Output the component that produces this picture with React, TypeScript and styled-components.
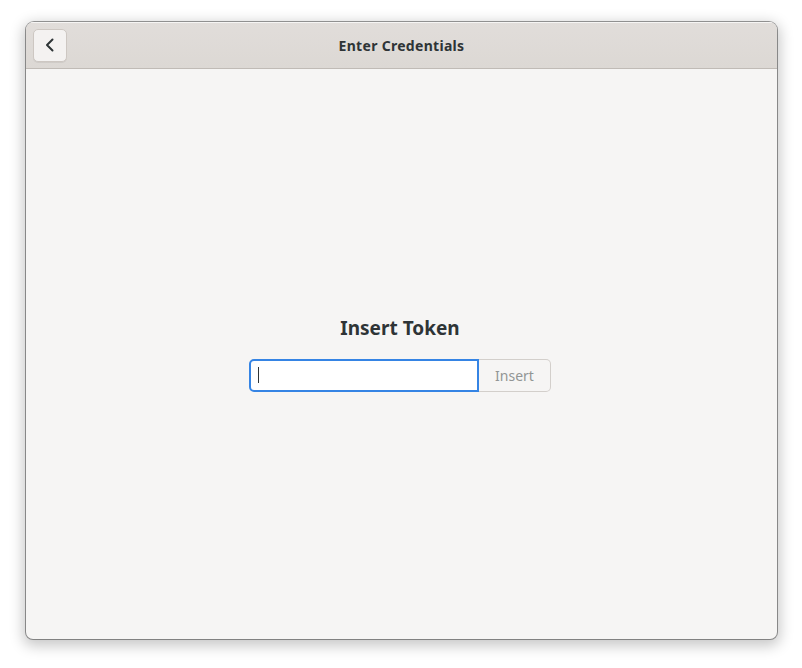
import React from 'react';
import styled, { createGlobalStyle } from 'styled-components';

const GlobalStyle = createGlobalStyle`
  html, body {
    margin: 0;
    padding: 0;
    background: #ffffff;
  }

  body {
    font-family: 'Noto Sans', 'DejaVu Sans', sans-serif;
    color: #2e3436;
  }
`;

const Desktop = styled.div`
  width: 802px;
  height: 668px;
  padding: 22px 25px 29px 26px;
  box-sizing: border-box;
`;

const Window = styled.div`
  height: 100%;
  display: flex;
  flex-direction: column;
  border-radius: 8px 8px 7px 7px;
  overflow: hidden;
  background: #f6f5f4;
  box-shadow: 0 0 0 1px rgba(0, 0, 0, 0.38), 0 4px 14px 3px rgba(0, 0, 0, 0.22);
`;

const HeaderBar = styled.header`
  height: 47px;
  flex-shrink: 0;
  display: grid;
  grid-template-columns: 1fr auto 1fr;
  align-items: center;
  padding: 0 7px;
  box-sizing: border-box;
  background: linear-gradient(#e1ddda, #dcd8d4);
  border-bottom: 1px solid #c0bbb6;
  box-shadow: inset 0 1px 0 rgba(255, 255, 255, 0.7);
`;

const BackButton = styled.button`
  width: 34px;
  height: 33px;
  padding: 0;
  display: flex;
  align-items: center;
  justify-content: center;
  justify-self: start;
  border: 1px solid #cdc7c2;
  border-radius: 5px;
  background: #f4f2f1;
  box-shadow: 0 1px 0 rgba(0, 0, 0, 0.06);
  color: #2e3436;
`;

const Title = styled.h1`
  margin: 0;
  font-size: 14px;
  font-weight: 700;
  color: #2e3436;
  letter-spacing: 0.3px;
`;

const Content = styled.main`
  flex: 1;
  display: flex;
  flex-direction: column;
  align-items: center;
  justify-content: center;
  gap: 18px;
  padding: 0 3px 2px 0;
`;

const Heading = styled.h2`
  margin: 0;
  font-size: 19px;
  font-weight: 700;
  color: #2e3436;
`;

const EntryRow = styled.div`
  position: relative;
  display: flex;
`;

const TokenInput = styled.input`
  width: 230px;
  height: 33px;
  box-sizing: border-box;
  padding: 0 8px;
  border: 2px solid #3584e4;
  border-radius: 5px 0 0 5px;
  background: #ffffff;
  font-family: inherit;
  font-size: 14px;
  color: #2e3436;
  caret-color: transparent;
  outline: none;
`;

// drawn caret, the headless capture never shows the blinking one
const Caret = styled.span`
  position: absolute;
  left: 9px;
  top: 8px;
  width: 1px;
  height: 16px;
  background: #2e3436;
  pointer-events: none;
`;

const InsertButton = styled.button`
  width: 72px;
  height: 33px;
  box-sizing: border-box;
  border: 1px solid #d3cfcb;
  border-left: none;
  border-radius: 0 5px 5px 0;
  background: #f6f5f4;
  font-family: inherit;
  font-size: 14px;
  color: #929595;
`;

const ChevronLeft = () => (
  <svg width="16" height="16" viewBox="0 0 16 16" fill="none">
    <path
      d="M10.5 2.5 5 8 10.5 13.5"
      stroke="currentColor"
      strokeWidth="2"
      strokeLinecap="round"
      strokeLinejoin="round"
    />
  </svg>
);

const App: React.FC = () => (
  <Desktop>
    <GlobalStyle />
    <Window>
      <HeaderBar>
        <BackButton aria-label="Back">
          <ChevronLeft />
        </BackButton>
        <Title>Enter Credentials</Title>
        <span />
      </HeaderBar>
      <Content>
        <Heading>Insert Token</Heading>
        <EntryRow>
          <TokenInput autoFocus aria-label="Token" />
          <Caret />
          <InsertButton disabled>Insert</InsertButton>
        </EntryRow>
      </Content>
    </Window>
  </Desktop>
);

export default App;
